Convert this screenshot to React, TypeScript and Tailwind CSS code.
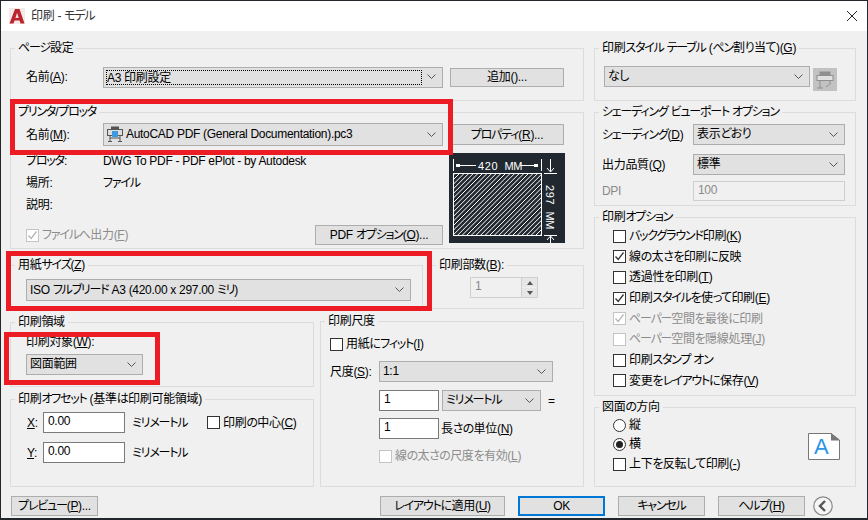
import React from "react";

// kana in the dialog font is much narrower than in Noto, so tighten those runs
const fit = (node: React.ReactNode): React.ReactNode =>
  React.Children.map(node, (c) => {
    if (typeof c === "string") {
      return c.split(/([\u30a0-\u30ff]+|[\u3040-\u309f]+)/).map((part, i) => {
        if (/^[\u30a0-\u30ff]/.test(part)) return <span key={i} className="tracking-[-1.2px]">{part}</span>;
        if (/^[\u3040-\u309f]/.test(part)) return <span key={i} className="tracking-[-0.7px]">{part}</span>;
        return part;
      });
    }
    if (React.isValidElement(c) && c.type === React.Fragment) return fit((c.props as { children?: React.ReactNode }).children);
    return c;
  });

const Group = ({ title, className, children }: { title: React.ReactNode; className: string; children?: React.ReactNode }) => (
  <div className={`relative border border-[#dcdcdc] ${className}`}>
    <span className="absolute -top-[9px] left-[4px] bg-[#f0f0f0] px-[3px] leading-[16px] whitespace-nowrap">{fit(title)}</span>
    {children}
  </div>
);

const Chevron = () => (
  <svg width="9" height="6" viewBox="0 0 9 6" className="shrink-0" fill="none" stroke="#555" strokeWidth="1">
    <path d="M0.5 0.5L4.5 4.5L8.5 0.5" />
  </svg>
);

const Combo = ({ className, children, focus }: { className: string; children?: React.ReactNode; focus?: boolean }) => (
  <div className={`flex items-center justify-between border border-[#adadad] bg-[#e1e1e1] pl-[3px] pr-[6px] ${className}`}>
    <div className={`flex-1 min-w-0 whitespace-nowrap ${focus ? "border border-dotted border-black -ml-[1px] mr-[5px] my-[2px] self-stretch leading-[14px]" : "pb-[1px]"}`}>
      {fit(children)}
    </div>
    <Chevron />
  </div>
);

const Btn = ({ className, children }: { className: string; children: React.ReactNode }) => (
  <div className={`flex items-center justify-center border border-[#adadad] bg-[#e1e1e1] whitespace-nowrap ${className}`}>
    <span>{fit(children)}</span>
  </div>
);

const Input = ({ className, children, disabled }: { className: string; children: React.ReactNode; disabled?: boolean }) => (
  <div className={`flex items-center pl-[4px] pb-[3px] border ${disabled ? "border-[#cfcfcf] bg-[#f0f0f0] text-[#8a8a8a]" : "border-[#7a7a7a] bg-white"} ${className}`}>{children}</div>
);

const Check = ({ checked, disabled, children, className }: { checked?: boolean; disabled?: boolean; children: React.ReactNode; className?: string }) => (
  <div className={`flex items-center gap-[3px] whitespace-nowrap ${disabled ? "text-[#8c8c8c]" : ""} ${className ?? ""}`}>
    <div className={`w-[13px] h-[13px] flex items-center justify-center border ${disabled ? "border-[#c4c4c4]" : "border-[#333]"} bg-white`}>
      {checked && (
        <svg width="11" height="11" viewBox="0 0 11 11" fill="none" stroke={disabled ? "#b5b5b5" : "#333"} strokeWidth="1.3">
          <path d="M1.5 5.5L4.2 8.5L9.5 1.5" />
        </svg>
      )}
    </div>
    <span>{fit(children)}</span>
  </div>
);

const Radio = ({ checked, children }: { checked?: boolean; children: React.ReactNode }) => (
  <div className="flex items-center gap-[3px]">
    <div className="w-[13px] h-[13px] rounded-full border border-[#333] bg-white flex items-center justify-center">
      {checked && <div className="w-[7px] h-[7px] rounded-full bg-[#222]" />}
    </div>
    <span>{children}</span>
  </div>
);

const PrinterIcon = () => (
  <svg width="16" height="16" viewBox="0 0 16 16" className="inline-block align-middle mr-[3px]" fill="none">
    <rect x="4" y="0.5" width="8" height="3" fill="#555" />
    <rect x="0.5" y="3.5" width="15" height="6" fill="#ddd" stroke="#555" />
    <rect x="5" y="5" width="6" height="6" fill="#3b9ae0" />
    <path d="M3 9.5V15M13 9.5V15M1 15.5H5M11 15.5H15M3 12H13" stroke="#555" />
  </svg>
);

const SheetPreview = () => {
  const hatch = [];
  for (let i = -80; i < 90; i += 4.6) hatch.push(`M${i} 63L${i + 63} 0`);
  return (
    <svg width="116" height="90" viewBox="0 0 116 90" className="block bg-[#212830]" fill="none" stroke="#fff" strokeWidth="1">
      <path d="M4.5 6V18M92.5 6V18M11 12.5H27M71 12.5H88M101.5 6V19M95 20.5H108M98 15L101.5 19L105 15M95 82.5H108M101.5 83V90M98 87L101.5 83L105 87" />
      <rect x="7" y="11" width="4" height="3" fill="#fff" stroke="none" />
      <rect x="85" y="11" width="4" height="3" fill="#fff" stroke="none" />
      <text x="29" y="17" fill="#fff" stroke="none" fontSize="11" fontFamily="Liberation Sans" letterSpacing="0.6">420</text>
      <text x="55.5" y="17" fill="#fff" stroke="none" fontSize="11" fontFamily="Liberation Sans">MM</text>
      <g transform="translate(4.5 20.5)">
        <clipPath id="sheet"><rect x="0" y="0" width="88" height="62" /></clipPath>
        <g clipPath="url(#sheet)"><path d={hatch.join("")} /></g>
        <rect x="0" y="0" width="88" height="62" />
      </g>
      <text transform="translate(97 32) rotate(90)" fill="#fff" stroke="none" fontSize="11" fontFamily="Liberation Sans" letterSpacing="0.6">297</text>
      <text transform="translate(97 58.5) rotate(90)" fill="#fff" stroke="none" fontSize="11" fontFamily="Liberation Sans">MM</text>
    </svg>
  );
};

export default function App() {
  return (
    <div className="relative w-[868px] h-[520px] overflow-hidden bg-[#f0f0f0] border-t border-x border-b-2 border-[#23272b] text-[12px] leading-[16px] tracking-[-0.3px] text-black [font-family:'Liberation_Sans','Noto_Sans_CJK_JP',sans-serif] [font-feature-settings:'palt']">
      {/* Title bar */}
      <div className="h-[30px] bg-white flex items-center pl-[8px] gap-[6px]">
        <svg width="16" height="16" viewBox="0 0 16 16">
          <rect width="16" height="16" fill="#f6e9e9" />
          <path d="M0.5 15.5L6 1H10.5L15.5 15.5H11.5L10.6 12.5H5.5L4.5 15.5Z" fill="#b8252c" />
          <path d="M6.4 10H9.8L8.1 4.8Z" fill="#fff" opacity="0.85" />
        </svg>
        <span className="text-[#333]">{fit("印刷 - モデル")}</span>
        <svg width="12" height="12" viewBox="0 0 12 12" className="ml-auto mr-[9px]" fill="none" stroke="#222">
          <path d="M1 1L11 11M11 1L1 11" />
        </svg>
      </div>

      <div className="flex pt-[17px] pl-[9px]">
        {/* Left column */}
        <div className="w-[574px] flex flex-col">
          <Group title="ページ設定" className="h-[53px] flex items-center pl-[15px] pt-[5px]">
            <span className="w-[77px]">名前(<u>A</u>):</span>
            <Combo focus className="w-[340px] h-[21px]">A3 印刷設定</Combo>
            <Btn className="w-[114px] h-[19px] ml-[7px]">追加(<u></u>)...</Btn>
          </Group>

          <Group title="プリンタ/プロッタ" className="h-[137px] mt-[11px] pl-[15px] pt-[10px]">
            <div className="flex items-center h-[23px]">
              <span className="w-[77px]">名前(<u>M</u>):</span>
              <Combo className="w-[340px] h-[23px]"><PrinterIcon />AutoCAD PDF (General Documentation).pc3</Combo>
              <Btn className="w-[114px] h-[21px] ml-[7px]">プロパティ(<u>R</u>)...</Btn>
            </div>
            <div className="flex mt-[4px]">
              <div className="w-[423px]">
                <div className="flex h-[22px] items-center"><span className="w-[77px]">{fit("プロッタ:")}</span><span>DWG To PDF - PDF ePlot - by Autodesk</span></div>
                <div className="flex h-[22px] items-center"><span className="w-[77px]">場所:</span><span>{fit("ファイル")}</span></div>
                <div className="flex h-[22px] items-center"><span className="w-[77px]">説明:</span></div>
                <div className="flex items-center justify-between mt-[9px] h-[20px]">
                  <Check checked disabled>ファイルへ出力(<u>F</u>)</Check>
                  <Btn className="w-[128px] h-[20px] mr-[6px]">PDF オプション(<u>O</u>)...</Btn>
                </div>
              </div>
              <div className="mt-[3px]"><SheetPreview /></div>
            </div>
          </Group>

          <div className="flex mt-[16px]">
            <Group title={<>用紙サイズ(<u>Z</u>)</>} className="w-[413px] h-[44px] pl-[15px] pt-[13px]">
              <Combo className="w-[385px] h-[22px]">ISO フルブリード A3 (420.00 x 297.00 ミリ)</Combo>
            </Group>
            <Group title={<>印刷部数(<u>B</u>):</>} className="w-[153px] h-[44px] ml-[8px] pl-[38px] pt-[11px]">
              <div className="flex w-[68px] h-[21px] border border-[#cfcfcf]">
                <span className="flex-1 pl-[4px] text-[#8a8a8a]">1</span>
                <div className="w-[16px] flex flex-col gap-[1px] bg-[#f0f0f0] border-l border-[#cfcfcf] text-[#555]">
                  <div className="flex-1 bg-[#e6e6e6] flex items-center justify-center"><span className="border-x-[3px] border-b-[4px] border-x-transparent border-b-[#555]" /></div>
                  <div className="flex-1 bg-[#e6e6e6] flex items-center justify-center"><span className="border-x-[3px] border-t-[4px] border-x-transparent border-t-[#555]" /></div>
                </div>
              </div>
            </Group>
          </div>

          <div className="flex mt-[12px]">
            <div className="w-[304px] flex flex-col pt-[1px]">
              <Group title="印刷領域" className="h-[65px] pl-[15px] pt-[11px]">
                <div>印刷対象(<u>W</u>):</div>
                <Combo className="w-[117px] h-[21px] mt-[4px]">図面範囲</Combo>
              </Group>
              <Group title="印刷オフセット (基準は印刷可能領域)" className="h-[88px] mt-[12px] pt-[12px] pl-[16px]">
                <div className="flex items-center h-[21px]">
                  <span className="w-[16px]"><u>X</u>:</span>
                  <Input className="w-[82px] h-[21px]">0.00</Input>
                  <span className="ml-[7px] w-[75px]">{fit("ミリメートル")}</span>
                  <Check>印刷の中心(<u>C</u>)</Check>
                </div>
                <div className="flex items-center h-[21px] mt-[9px]">
                  <span className="w-[16px]"><u>Y</u>:</span>
                  <Input className="w-[82px] h-[21px]">0.00</Input>
                  <span className="ml-[7px]">{fit("ミリメートル")}</span>
                </div>
              </Group>
            </div>

            <Group title="印刷尺度" className="w-[264px] h-[166px] ml-[6px] pt-[14px] pl-[9px]">
              <Check>用紙にフィット(<u>I</u>)</Check>
              <div className="flex items-center mt-[9px]">
                <span className="w-[49px]">尺度(<u>S</u>):</span>
                <Combo className="w-[174px] h-[21px]">1:1</Combo>
              </div>
              <div className="flex items-center mt-[8px] ml-[49px]">
                <Input className="w-[60px] h-[21px]">1</Input>
                <Combo className="w-[99px] h-[21px] ml-[3px]">ミリメートル</Combo>
                <span className="ml-[7px]">=</span>
              </div>
              <div className="flex items-center mt-[7px] ml-[49px]">
                <Input className="w-[60px] h-[21px]">1</Input>
                <span className="ml-[2px]">{fit("長さの単位")}(<u>N</u>)</span>
              </div>
              <Check disabled className="mt-[9px] ml-[49px]">線の太さの尺度を有効(<u>L</u>)</Check>
            </Group>
          </div>

          <div className="flex items-center mt-[9px]">
            <Btn className="w-[87px] h-[20px] ml-[1px]">プレビュー(<u>P</u>)...</Btn>
          </div>
        </div>

        {/* Right column */}
        <div className="w-[262px] ml-[10px] flex flex-col">
          <Group title={<>印刷スタイル テーブル (ペン割り当て)(<u>G</u>)</>} className="h-[53px] pl-[9px] pt-[17px]">
            <div className="flex items-start">
              <Combo className="w-[206px] h-[21px]">なし</Combo>
              <div className="w-[24px] h-[23px] ml-[3px] mt-[2px] bg-[#c2c2c2] flex items-center justify-center">
                <svg width="18" height="18" viewBox="0 0 18 18" fill="none" stroke="#8f8f8f">
                  <rect x="4" y="1" width="10" height="3" fill="#8f8f8f" />
                  <rect x="1" y="4.5" width="16" height="5" fill="#e0e0e0" />
                  <path d="M4 9.5V17M1 17H7M14 10V12M10 16L15 12" />
                </svg>
              </div>
            </div>
          </Group>

          <Group title="シェーディング ビューポート オプション" className="h-[94px] mt-[11px] pl-[7px] pt-[11px]">
            <div className="flex items-center">
              <span className="w-[91px] whitespace-nowrap">{fit("シェーディング")}(<u>D</u>)</span>
              <Combo className="w-[152px] h-[21px]">表示どおり</Combo>
            </div>
            <div className="flex items-center mt-[9px]">
              <span className="w-[91px] whitespace-nowrap">出力品質(<u>Q</u>)</span>
              <Combo className="w-[152px] h-[21px]">標準</Combo>
            </div>
            <div className="flex items-center mt-[6px] text-[#8a8a8a]">
              <span className="w-[91px]">DPI</span>
              <Input disabled className="w-[152px] h-[20px]">100</Input>
            </div>
          </Group>

          <Group title="印刷オプション" className="h-[179px] mt-[11px] pl-[18px] pt-[10px] flex flex-col gap-[4.7px]">
            <Check>バックグラウンド印刷(<u>K</u>)</Check>
            <Check checked>線の太さを印刷に反映</Check>
            <Check>透過性を印刷(<u>T</u>)</Check>
            <Check checked>印刷スタイルを使って印刷(<u>E</u>)</Check>
            <Check checked disabled>ペーパー空間を最後に印刷</Check>
            <Check disabled>ペーパー空間を隠線処理(<u>J</u>)</Check>
            <Check>印刷スタンプ オン</Check>
            <Check>変更をレイアウトに保存(<u>V</u>)</Check>
          </Group>

          <Group title="図面の方向" className="h-[80px] mt-[11px] pl-[18px] pt-[9px] flex justify-between">
            <div className="flex flex-col gap-[3px]">
              <Radio>縦</Radio>
              <Radio checked>横</Radio>
              <Check className="mt-[1px]">上下を反転して印刷(<u>-</u>)</Check>
            </div>
            <svg width="32" height="27" viewBox="0 0 32 27" className="mt-[16px] mr-[15px]" fill="none">
              <path d="M0.5 0.5H23L31.5 7V26.5H0.5Z" fill="#fff" stroke="#777" />
              <path d="M23 0L32 7.5H23Z" fill="#777" />
              <text x="6" y="21" fill="#2b95e6" fontSize="22" fontFamily="Liberation Sans">A</text>
            </svg>
          </Group>
        </div>
      </div>

      {/* Bottom buttons */}
      <div className="absolute left-[379px] top-[495px] flex items-center">
        <Btn className="w-[125px] h-[20px]">レイアウトに適用(<u>U</u>)</Btn>
        <Btn className="w-[87px] h-[20px] ml-[13px] !border-2 !border-[#0078d7]">OK</Btn>
        <Btn className="w-[87px] h-[20px] ml-[13px]">キャンセル</Btn>
        <Btn className="w-[87px] h-[20px] ml-[13px]">ヘルプ(<u>H</u>)</Btn>
        <svg width="20" height="20" viewBox="0 0 20 20" className="ml-[8px]" fill="none">
          <circle cx="10" cy="10" r="9.2" stroke="#888" strokeWidth="1.2" fill="#f5f5f5" />
          <path d="M12 5L7 10L12 15" stroke="#555" strokeWidth="2.4" />
        </svg>
      </div>

      {/* Red annotation frames */}
      <div className="absolute left-[9px] top-[98px] w-[443px] h-[56px] border-[5px] border-[#ed1c24]" />
      <div className="absolute left-[5px] top-[250px] w-[426px] h-[60px] border-[5px] border-[#ed1c24]" />
      <div className="absolute left-[3px] top-[331px] w-[156px] h-[53px] border-[5px] border-[#ed1c24]" />
    </div>
  );
}
